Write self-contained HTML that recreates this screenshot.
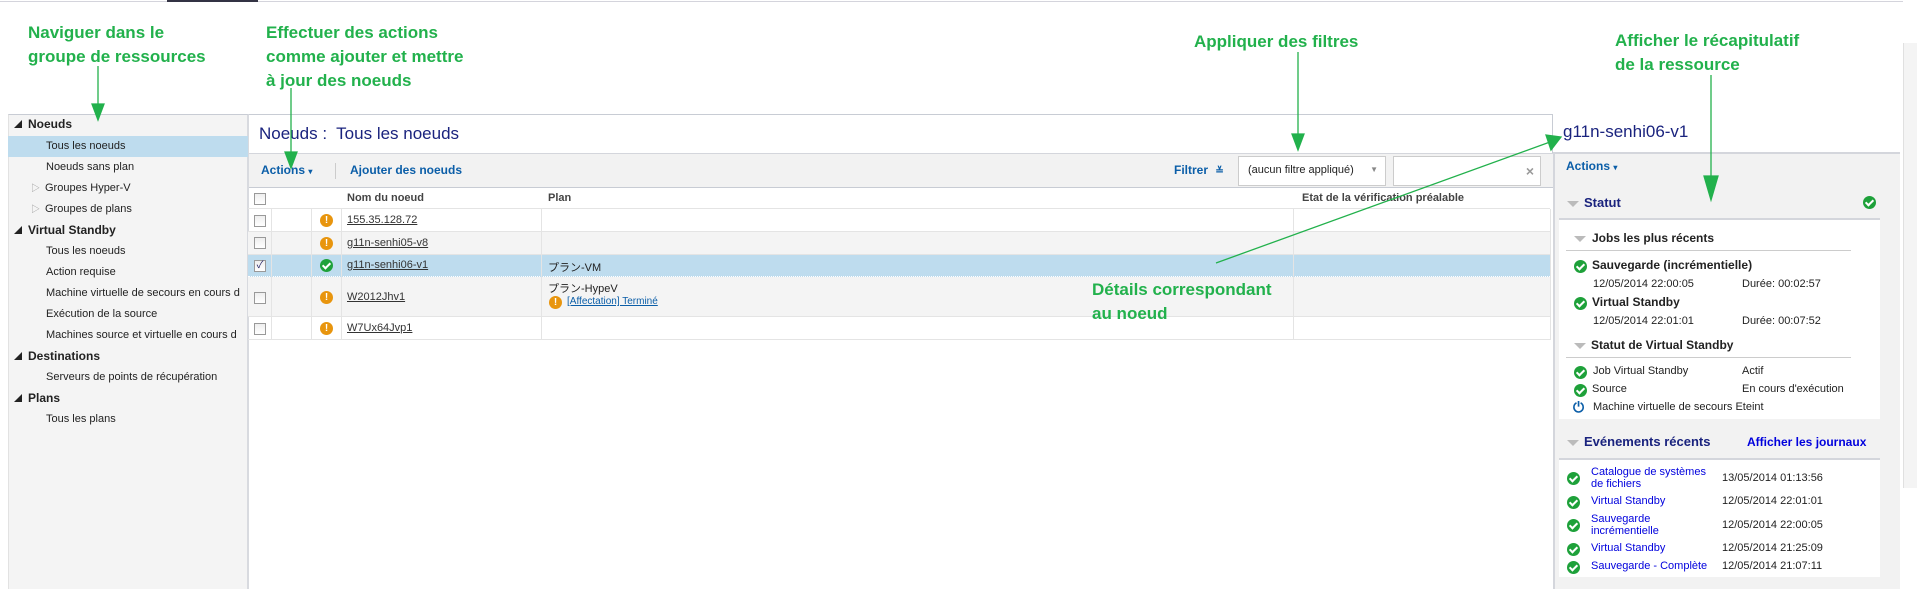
<!DOCTYPE html>
<html><head><meta charset="utf-8">
<style>
*{margin:0;padding:0;box-sizing:border-box}
body{width:1917px;height:593px;background:#fff;position:relative;overflow:hidden;font-family:"Liberation Sans","Noto Sans CJK JP",sans-serif;font-size:11px;color:#222}
.a{position:absolute;white-space:nowrap}
.ann{position:absolute;color:#22b14c;font-weight:bold;font-size:17px;line-height:24px;white-space:nowrap;font-family:"Liberation Sans",sans-serif}
.lrow{position:absolute;left:8px;width:240px;height:21px;line-height:21px}
.hdr{font-weight:bold;font-size:12px}
.cb{position:absolute;width:12px;height:12px;border:1px solid #999;background:linear-gradient(#eee,#fff)}
.warn,.ok{position:absolute;width:13px;height:13px;border-radius:50%;color:#fff;font-weight:bold;font-size:10px;line-height:13px;text-align:center}
.warn{background:#e8950e}
.ok{background:#1ea13a}
.ok::after{content:"";position:absolute;left:4px;top:2px;width:3px;height:6px;border:solid #fff;border-width:0 2px 2px 0;transform:rotate(45deg)}
.tr{position:absolute;left:248px;width:1302px;border-bottom:1px solid #e4e4e4}
.vl{position:absolute;width:1px;background:#e4e4e4}
.lnk{text-decoration:underline;color:#333}
.tri{position:absolute;width:0;height:0;border-left:6px solid transparent;border-right:6px solid transparent;border-top:6px solid #bbb}
.rb{font-weight:bold;font-size:12px}
.blue{color:#0000dd}
</style></head><body>
<!-- top line -->
<div class="a" style="left:0;top:1px;width:1903px;height:1px;background:#d4d4dc"></div>
<div class="a" style="left:167px;top:0;width:91px;height:2px;background:#334"></div>
<div class="a" style="left:1903px;top:43px;width:14px;height:445px;background:#f4f4f4;border-left:1px solid #e0e0e0"></div>

<!-- annotations -->
<div class="ann" style="left:28px;top:21px">Naviguer dans le<br>groupe de ressources</div>
<div class="ann" style="left:266px;top:21px">Effectuer des actions<br>comme ajouter et mettre<br>à jour des noeuds</div>
<div class="ann" style="left:1194px;top:30px">Appliquer des filtres</div>
<div class="ann" style="left:1615px;top:29px">Afficher le récapitulatif<br>de la ressource</div>

<!-- left panel -->
<div class="a" style="left:8px;top:114px;width:241px;height:475px;background:#f4f4f4;border-top:1px solid #c8ccd4;border-right:2px solid #d8dadf;border-left:1px solid #e2e2e2"></div>
<div class="lrow hdr" style="top:114px"><span style="position:absolute;left:6px;font-size:8px">◢</span><span style="position:absolute;left:20px">Noeuds</span></div>
<div class="lrow" style="top:136px;background:#bedcee"><span style="position:absolute;left:38px">Tous les noeuds</span></div>
<div class="lrow" style="top:157px"><span style="position:absolute;left:38px">Noeuds sans plan</span></div>
<div class="lrow" style="top:178px"><span style="position:absolute;left:23px;color:#999;font-size:9px">▷</span><span style="position:absolute;left:37px">Groupes Hyper-V</span></div>
<div class="lrow" style="top:199px"><span style="position:absolute;left:23px;color:#999;font-size:9px">▷</span><span style="position:absolute;left:37px">Groupes de plans</span></div>
<div class="lrow hdr" style="top:220px"><span style="position:absolute;left:6px;font-size:8px">◢</span><span style="position:absolute;left:20px">Virtual Standby</span></div>
<div class="lrow" style="top:241px"><span style="position:absolute;left:38px">Tous les noeuds</span></div>
<div class="lrow" style="top:262px"><span style="position:absolute;left:38px">Action requise</span></div>
<div class="lrow" style="top:283px;overflow:hidden"><span style="position:absolute;left:38px">Machine virtuelle de secours en cours d</span></div>
<div class="lrow" style="top:304px"><span style="position:absolute;left:38px">Exécution de la source</span></div>
<div class="lrow" style="top:325px;overflow:hidden"><span style="position:absolute;left:38px">Machines source et virtuelle en cours d</span></div>
<div class="lrow hdr" style="top:346px"><span style="position:absolute;left:6px;font-size:8px">◢</span><span style="position:absolute;left:20px">Destinations</span></div>
<div class="lrow" style="top:367px"><span style="position:absolute;left:38px">Serveurs de points de récupération</span></div>
<div class="lrow hdr" style="top:388px"><span style="position:absolute;left:6px;font-size:8px">◢</span><span style="position:absolute;left:20px">Plans</span></div>
<div class="lrow" style="top:409px"><span style="position:absolute;left:38px">Tous les plans</span></div>

<!-- center panel -->
<div class="a" style="left:249px;top:114px;width:1304px;height:1px;background:#c8ccd4"></div>
<div class="a" style="left:1552px;top:114px;width:1px;height:39px;background:#c8ccd4"></div>
<div class="a" style="left:259px;top:124px;font-size:17px;color:#1a237e">Noeuds :&nbsp; Tous les noeuds</div>
<div class="a" style="left:249px;top:153px;width:1304px;height:35px;background:#f2f2f2;border-top:1px solid #d4d6dc;border-bottom:1px solid #c8ccd4"></div>
<div class="a" style="left:261px;top:163px;font-weight:bold;color:#0b5ea8;font-size:12px">Actions <span style="font-size:8px">▾</span></div>
<div class="a" style="left:335px;top:163px;width:1px;height:16px;background:#ccc"></div>
<div class="a" style="left:350px;top:163px;font-weight:bold;color:#0b5ea8;font-size:12px">Ajouter des noeuds</div>
<div class="a" style="left:1174px;top:163px;font-weight:bold;color:#0b5ea8;font-size:12px">Filtrer <span style="font-size:10px;margin-left:4px">≚</span></div>
<div class="a" style="left:1238px;top:156px;width:148px;height:30px;background:#fff;border:1px solid #ccc;padding:7px 9px;font-size:11px">(aucun filtre appliqué)<span style="position:absolute;right:7px;top:8px;color:#888;font-size:8px">▼</span></div>
<div class="a" style="left:1393px;top:156px;width:148px;height:30px;background:#fff;border:1px solid #ccc"><span style="position:absolute;right:6px;top:6px;color:#999;font-size:14px;font-weight:bold">×</span></div>

<!-- table -->
<div class="tr" style="top:188px;height:21px"></div>
<div class="tr" style="top:209px;height:23px"></div>
<div class="tr" style="top:232px;height:23px;background:#f4f4f4"></div>
<div class="tr" style="top:255px;height:22px;background:#bedcee;border-bottom:1px dotted #fff"></div>
<div class="tr" style="top:277px;height:40px;background:#f4f4f4"></div>
<div class="tr" style="top:317px;height:23px"></div>
<div class="vl" style="left:271px;top:209px;height:131px"></div>
<div class="vl" style="left:311px;top:209px;height:131px"></div>
<div class="vl" style="left:341px;top:209px;height:131px"></div>
<div class="vl" style="left:541px;top:209px;height:131px"></div>
<div class="vl" style="left:1293px;top:209px;height:131px"></div>
<div class="vl" style="left:1550px;top:209px;height:131px"></div>
<div class="cb" style="left:254px;top:193px"></div>
<div class="a hdr" style="left:347px;top:192px;color:#444;font-size:11px">Nom du noeud</div>
<div class="a hdr" style="left:548px;top:192px;color:#444;font-size:11px">Plan</div>
<div class="a hdr" style="left:1302px;top:192px;color:#444;font-size:11px">Etat de la vérification préalable</div>

<div class="cb" style="left:254px;top:215px"></div><div class="warn" style="left:320px;top:214px">!</div><div class="a lnk" style="left:347px;top:214px">155.35.128.72</div>
<div class="cb" style="left:254px;top:237px"></div><div class="warn" style="left:320px;top:237px">!</div><div class="a lnk" style="left:347px;top:237px">g11n-senhi05-v8</div>
<div class="cb" style="left:254px;top:260px;color:#226;font-size:10px;line-height:10px;text-align:center">✓</div><div class="ok" style="left:320px;top:259px"></div><div class="a lnk" style="left:347px;top:259px">g11n-senhi06-v1</div><div class="a" style="left:548px;top:259px">プラン-VM</div>
<div class="cb" style="left:254px;top:292px"></div><div class="warn" style="left:320px;top:291px">!</div><div class="a lnk" style="left:347px;top:291px">W2012Jhv1</div>
<div class="a" style="left:548px;top:280px">プラン-HypeV</div>
<div class="warn" style="left:549px;top:296px">!</div><div class="a" style="left:567px;top:296px;color:#0b5ea8;text-decoration:underline;font-size:10px">[Affectation] Terminé</div>
<div class="cb" style="left:254px;top:323px"></div><div class="warn" style="left:320px;top:322px">!</div><div class="a lnk" style="left:347px;top:322px">W7Ux64Jvp1</div>

<div class="ann" style="left:1092px;top:278px">Détails correspondant<br>au noeud</div>

<!-- right panel -->
<div class="a" style="left:1563px;top:122px;font-size:17px;color:#1a237e">g11n-senhi06-v1</div>
<div class="a" style="left:1553px;top:152px;width:347px;height:437px;background:#f2f2f2;border-top:2px solid #d4d6dc;border-left:2px solid #d4d6dc"></div>
<div class="a" style="left:1566px;top:159px;font-weight:bold;color:#0b5ea8;font-size:12px">Actions <span style="font-size:8px">▾</span></div>
<div class="tri" style="left:1567px;top:201px"></div>
<div class="a rb" style="left:1584px;top:195px;color:#1a237e;font-size:13px">Statut</div>
<div class="ok" style="left:1863px;top:196px"></div>
<div class="a" style="left:1559px;top:218px;width:321px;height:201px;background:#fff;border-top:2px solid #d4d6dc"></div>
<div class="tri" style="left:1574px;top:236px"></div>
<div class="a rb" style="left:1592px;top:231px">Jobs les plus récents</div>
<div class="a" style="left:1566px;top:250px;width:285px;height:1px;background:#ccc"></div>
<div class="ok" style="left:1574px;top:260px"></div><div class="a rb" style="left:1592px;top:258px">Sauvegarde (incrémentielle)</div>
<div class="a" style="left:1593px;top:278px">12/05/2014 22:00:05</div><div class="a" style="left:1742px;top:278px">Durée: 00:02:57</div>
<div class="ok" style="left:1574px;top:297px"></div><div class="a rb" style="left:1592px;top:295px">Virtual Standby</div>
<div class="a" style="left:1593px;top:315px">12/05/2014 22:01:01</div><div class="a" style="left:1742px;top:315px">Durée: 00:07:52</div>
<div class="tri" style="left:1574px;top:343px"></div>
<div class="a rb" style="left:1591px;top:338px">Statut de Virtual Standby</div>
<div class="a" style="left:1566px;top:357px;width:285px;height:1px;background:#ccc"></div>
<div class="ok" style="left:1574px;top:366px"></div><div class="a" style="left:1593px;top:365px">Job Virtual Standby</div><div class="a" style="left:1742px;top:365px">Actif</div>
<div class="ok" style="left:1574px;top:384px"></div><div class="a" style="left:1592px;top:383px">Source</div><div class="a" style="left:1742px;top:383px">En cours d'exécution</div>
<div class="a" style="left:1573px;top:399px;color:#0b5ea8;font-size:14px;font-weight:bold">⏻</div><div class="a" style="left:1593px;top:401px">Machine virtuelle de secours Eteint</div>
<div class="tri" style="left:1567px;top:440px"></div>
<div class="a rb" style="left:1584px;top:434px;color:#1a237e;font-size:13px">Evénements récents</div>
<div class="a rb blue" style="left:1747px;top:435px">Afficher les journaux</div>
<div class="a" style="left:1559px;top:458px;width:321px;height:119px;background:#fff;border-top:2px solid #d4d6dc"></div>
<div class="ok" style="left:1567px;top:472px"></div><div class="a blue" style="left:1591px;top:466px;line-height:12px">Catalogue de systèmes<br>de fichiers</div><div class="a" style="left:1722px;top:472px">13/05/2014 01:13:56</div>
<div class="ok" style="left:1567px;top:496px"></div><div class="a blue" style="left:1591px;top:495px">Virtual Standby</div><div class="a" style="left:1722px;top:495px">12/05/2014 22:01:01</div>
<div class="ok" style="left:1567px;top:519px"></div><div class="a blue" style="left:1591px;top:513px;line-height:12px">Sauvegarde<br>incrémentielle</div><div class="a" style="left:1722px;top:519px">12/05/2014 22:00:05</div>
<div class="ok" style="left:1567px;top:543px"></div><div class="a blue" style="left:1591px;top:542px">Virtual Standby</div><div class="a" style="left:1722px;top:542px">12/05/2014 21:25:09</div>
<div class="ok" style="left:1567px;top:561px"></div><div class="a blue" style="left:1591px;top:560px">Sauvegarde - Complète</div><div class="a" style="left:1722px;top:560px">12/05/2014 21:07:11</div>

<!-- arrows -->
<svg class="a" style="left:0;top:0" width="1917" height="593">
<g stroke="#22b14c" stroke-width="1.3" fill="#22b14c">
<line x1="98" y1="66" x2="98" y2="108"/><polygon points="92,104 104,104 98,120"/>
<line x1="291" y1="88" x2="291" y2="155"/><polygon points="285,152 297,152 291,168"/>
<line x1="1298" y1="52" x2="1298" y2="135"/><polygon points="1292,134 1304,134 1298,150"/>
<line x1="1711" y1="75" x2="1711" y2="180"/><polygon points="1704,176 1718,176 1711,200"/>
<line x1="1216" y1="263" x2="1550" y2="142"/><polygon points="1561,137 1546,135 1551,150"/>
</g></svg>
</body></html>
